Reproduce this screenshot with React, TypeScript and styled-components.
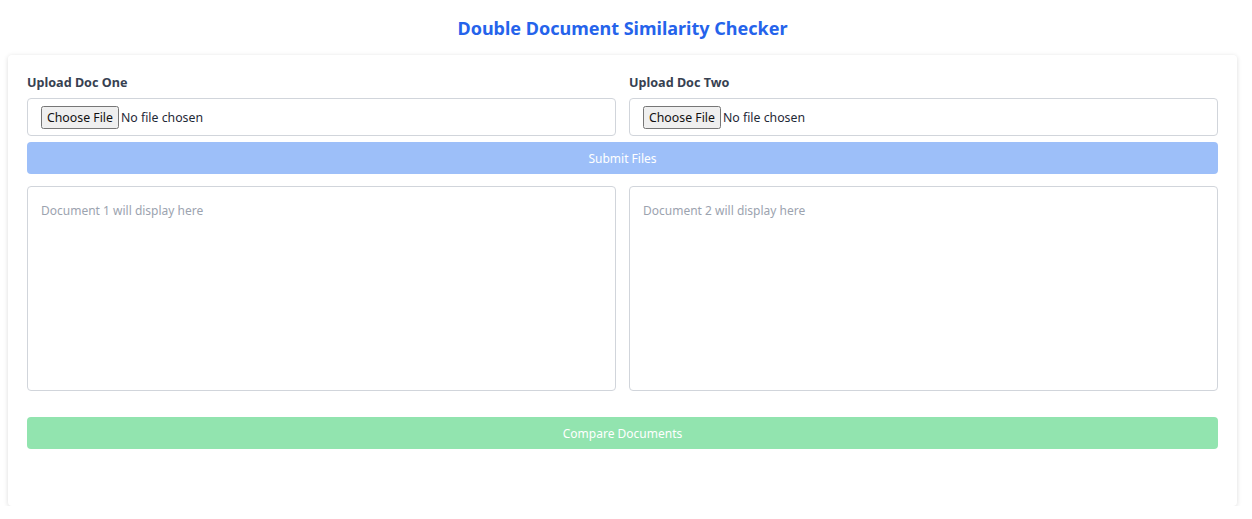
import styled, { createGlobalStyle } from 'styled-components'

const GlobalStyle = createGlobalStyle`
  body {
    margin: 0;
    padding: 0 8px;
    background: #ffffff;
    font-family: "Noto Sans", "Open Sans", sans-serif;
    color: #1f2937;
  }
  * {
    box-sizing: border-box;
  }
`

interface UploadFieldProps {
  label: string
}

const UploadField = ({ label }: UploadFieldProps) => {
  return (
    <Field>
      <Label>{label}</Label>
      <FileBox>
        <FileInput type="file" />
      </FileBox>
    </Field>
  )
}

const App = () => {
  return (
    <>
      <GlobalStyle />
      <Page>
        <Title>Double Document Similarity Checker</Title>
        <Card>
          <TwoCols>
            <UploadField label="Upload Doc One" />
            <UploadField label="Upload Doc Two" />
          </TwoCols>
          <ActionButton $tone="blue" $gap={6} disabled>
            Submit Files
          </ActionButton>
          <Previews>
            <Preview readOnly placeholder="Document 1 will display here" />
            <Preview readOnly placeholder="Document 2 will display here" />
          </Previews>
          <ActionButton $tone="green" $gap={26} disabled>
            Compare Documents
          </ActionButton>
        </Card>
      </Page>
    </>
  )
}

const Page = styled.div`
  width: 1229px;
  display: flex;
  flex-direction: column;
`

const Title = styled.h1`
  margin: 0;
  height: 55px;
  display: flex;
  align-items: center;
  justify-content: center;
  font-size: 18px;
  font-weight: 700;
  color: #2563eb;
`

const Card = styled.div`
  background: #ffffff;
  border-radius: 4px;
  box-shadow: 0 1px 5px rgba(0, 0, 0, 0.14);
  padding: 20px 19px 57px;
  display: flex;
  flex-direction: column;
`

const TwoCols = styled.div`
  display: grid;
  grid-template-columns: 1fr 1fr;
  column-gap: 13px;
`

const Field = styled.div`
  display: flex;
  flex-direction: column;
`

const Label = styled.label`
  font-size: 12.6px;
  line-height: 16px;
  font-weight: 700;
  color: #374151;
  margin-bottom: 7px;
`

const FileBox = styled.div`
  height: 38px;
  border: 1px solid #d1d5db;
  border-radius: 4px;
  padding: 0 13px;
  display: flex;
  align-items: center;
`

const FileInput = styled.input`
  font-family: "Noto Sans", "Open Sans", sans-serif;
  font-size: 12.3px;
  color: #1f2937;

  &::file-selector-button {
    font-family: "Noto Sans", "Open Sans", sans-serif;
    font-size: 12.3px;
    height: 23px;
    padding: 0 4px;
    margin-right: 2px;
    color: #111111;
  }
`

const ActionButton = styled.button<{ $tone: 'blue' | 'green'; $gap: number }>`
  width: 100%;
  height: 32px;
  margin-top: ${(p) => p.$gap}px;
  border: none;
  border-radius: 4px;
  background: ${(p) => (p.$tone === 'blue' ? '#9dbff9' : '#92e4af')};
  color: #ffffff;
  font-family: "Noto Sans", "Open Sans", sans-serif;
  font-size: 12px;
  cursor: not-allowed;
`

const Previews = styled.div`
  display: grid;
  grid-template-columns: 1fr 1fr;
  column-gap: 13px;
  margin-top: 12px;
`

const Preview = styled.textarea`
  height: 205px;
  resize: none;
  border: 1px solid #d1d5db;
  border-radius: 4px;
  padding: 13px 13px;
  font-family: "Noto Sans", "Open Sans", sans-serif;
  font-size: 12px;
  line-height: 22px;
  color: #1f2937;
  outline: none;

  &::placeholder {
    color: #9ca3af;
  }
`

export default App
